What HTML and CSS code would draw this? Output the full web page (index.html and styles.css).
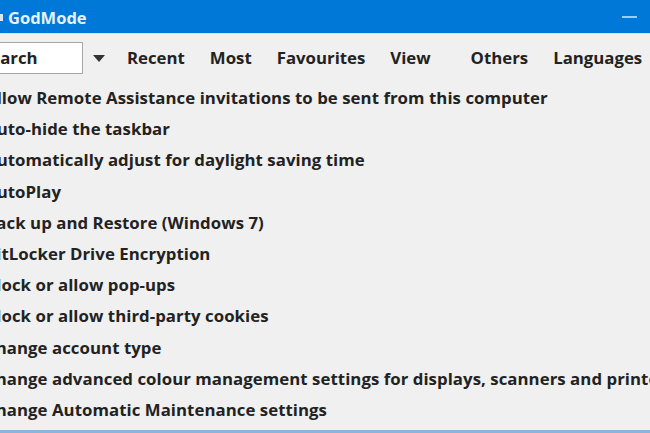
FILE: index.html
```html
<!DOCTYPE html>
<html lang="en">
  <head>
    <title>GodMode</title>
    <meta charset="utf-8" />
    <link rel="stylesheet" href="styles.css">
  </head>
  <body>
    <div class="window">
      <header class="titlebar">
        <span class="app-icon"></span>
        <span class="title">GodMode</span>
        <span class="minimize"></span>
      </header>
      <nav class="toolbar">
        <div class="search">Search</div>
        <span class="dropdown"></span>
        <a class="menu">Recent</a>
        <a class="menu">Most</a>
        <a class="menu">Favourites</a>
        <a class="menu">View</a>
        <a class="menu others">Others</a>
        <a class="menu">Languages</a>
      </nav>
      <ul class="tasks">
        <li>Allow Remote Assistance invitations to be sent from this computer</li>
        <li>Auto-hide the taskbar</li>
        <li>Automatically adjust for daylight saving time</li>
        <li>AutoPlay</li>
        <li>Back up and Restore (Windows 7)</li>
        <li>BitLocker Drive Encryption</li>
        <li>Block or allow pop-ups</li>
        <li>Block or allow third-party cookies</li>
        <li>Change account type</li>
        <li>Change advanced colour management settings for displays, scanners and printers</li>
        <li>Change Automatic Maintenance settings</li>
      </ul>
      <div class="statusbar"></div>
    </div>
  </body>
</html>
```

FILE: styles.css
```css
html,
body {
  margin: 0;
  height: 100%;
}

body {
  font-family: "Open Sans", "Liberation Sans", sans-serif;
  background: #f0f0f0;
  color: #222;
  overflow: hidden;
}

.window {
  width: 650px;
  height: 433px;
  display: flex;
  flex-direction: column;
  overflow: hidden;
}

.titlebar {
  height: 33px;
  flex: none;
  display: flex;
  align-items: center;
  background: #0078d7;
  border-bottom: 1px solid #cfe4f5;
  color: #e8f2fb;
  font-weight: 700;
  font-size: 16.5px;
}

.app-icon {
  width: 3px;
  height: 7px;
  margin-top: 1px;
  background: #d7e9f8;
}

.title {
  margin-left: 5px;
  margin-top: 1px;
}

.minimize {
  margin-left: auto;
  margin-right: 13px;
  width: 15px;
  height: 2px;
  background: #9fcdf2;
}

.toolbar {
  height: 46px;
  flex: none;
  display: flex;
  align-items: center;
  font-size: 16.8px;
  font-weight: 700;
}

.search {
  box-sizing: border-box;
  width: 114px;
  height: 32px;
  margin-left: -31px;
  margin-top: 1px;
  padding-left: 11px;
  line-height: 30px;
  background: #fff;
  border: 1px solid #a6a6a6;
}

.dropdown {
  margin-left: 10px;
  margin-top: 2px;
  width: 0;
  height: 0;
  border-left: 6px solid transparent;
  border-right: 6px solid transparent;
  border-top: 7px solid #333;
}

.menu {
  margin-left: 25px;
  margin-top: 1px;
}

.menu.others {
  margin-left: 40px;
}

.toolbar .dropdown + .menu {
  margin-left: 22px;
}

.tasks {
  list-style: none;
  margin: 2px 0 0 -15px;
  padding: 0;
  flex: 1;
  font-size: 16.8px;
  font-weight: 700;
  letter-spacing: 0.05px;
  white-space: nowrap;
}

.tasks li {
  height: 31.2px;
  line-height: 31.2px;
}

.statusbar {
  height: 3px;
  flex: none;
  background: #8db5da;
}
```
